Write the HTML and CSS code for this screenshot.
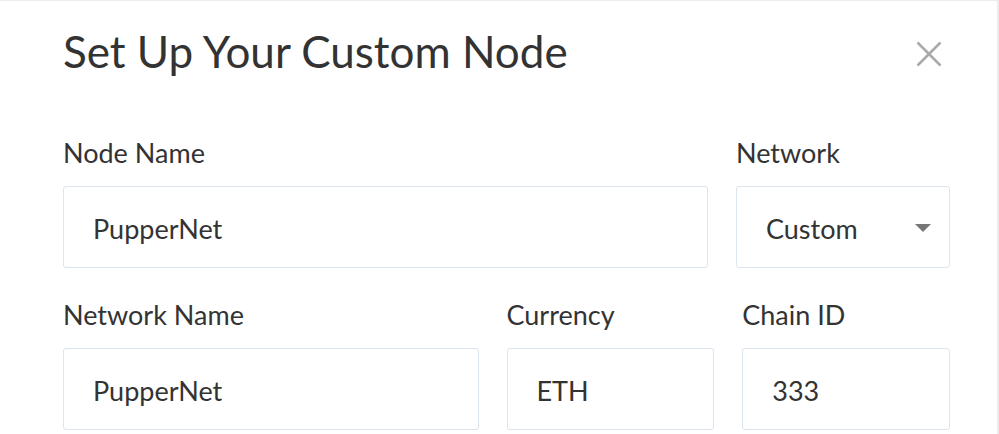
FILE: index.html
```html
<!DOCTYPE html>
<html lang="en">
<head>
<meta charset="utf-8">
<title>Set Up Your Custom Node</title>
<link rel="stylesheet" href="styles.css">
</head>
<body>
<div class="modal">
  <div class="header">
    <h1 class="title">Set Up Your Custom Node</h1>
    <button class="close" aria-label="Close">
      <svg width="26" height="26" viewBox="0 0 26 26"><path d="M1.5 1.5 L24.5 24.5 M24.5 1.5 L1.5 24.5" stroke="#aaaaaa" stroke-width="2.6" fill="none"/></svg>
    </button>
  </div>
  <div class="row row-top">
    <div class="field">
      <div class="label">Node Name</div>
      <div class="input">PupperNet</div>
    </div>
    <div class="field">
      <div class="label">Network</div>
      <div class="input select">Custom<span class="caret"></span></div>
    </div>
  </div>
  <div class="row row-bottom">
    <div class="field">
      <div class="label">Network Name</div>
      <div class="input">PupperNet</div>
    </div>
    <div class="field">
      <div class="label">Currency</div>
      <div class="input">ETH</div>
    </div>
    <div class="field">
      <div class="label">Chain ID</div>
      <div class="input">333</div>
    </div>
  </div>
</div>
</body>
</html>
```

FILE: styles.css
```css
html, body {
  margin: 0;
  padding: 0;
}
body {
  background: #ececec;
  font-family: Lato, "Open Sans", sans-serif;
  color: #333333;
  height: 434px;
  overflow: hidden;
}
.modal {
  width: 997px;
  height: 433px;
  margin-top: 1px;
  background: #ffffff;
  box-sizing: border-box;
  padding: 28px 47px 0 63px;
}
.header {
  display: flex;
  justify-content: space-between;
  align-items: flex-start;
}
.title {
  margin: 0;
  font-size: 44px;
  line-height: 1;
  font-weight: 400;
  color: #333333;
}
.close {
  border: 0;
  background: none;
  padding: 0;
  margin: 12px 8px 0 0;
  width: 26px;
  height: 26px;
  display: block;
}
.close svg {
  display: block;
}
.row {
  display: grid;
  column-gap: 28px;
}
.row-top {
  grid-template-columns: 1fr 214px;
  margin-top: 66px;
}
.row-bottom {
  grid-template-columns: 2fr 1fr 1fr;
  margin-top: 33px;
}
.label {
  font-size: 27px;
  line-height: 1;
  color: #333333;
  margin-bottom: 20px;
}
.input {
  box-sizing: border-box;
  height: 82px;
  border: 1px solid #dce4ef;
  border-radius: 3px;
  padding: 2px 0 0 29px;
  font-size: 27px;
  line-height: 1;
  color: #333333;
  display: flex;
  align-items: center;
}
.select {
  justify-content: space-between;
  padding-right: 18px;
}
.caret {
  width: 0;
  height: 0;
  border-left: 8px solid transparent;
  border-right: 8px solid transparent;
  border-top: 8px solid #777777;
}
```
